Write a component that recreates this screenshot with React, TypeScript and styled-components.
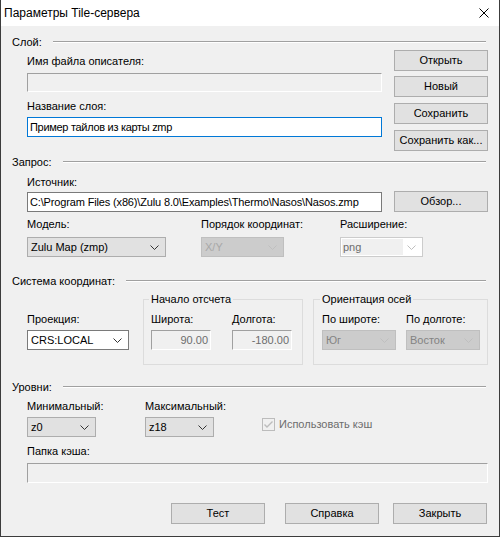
import styled, { createGlobalStyle } from "styled-components";

const GlobalStyle = createGlobalStyle`
  html, body {
    margin: 0;
    padding: 0;
    background: #ffffff;
  }
  body {
    font-family: "Liberation Sans", Arial, sans-serif;
    font-size: 11px;
    color: #000;
  }
  * {
    box-sizing: border-box;
  }
`;

const Window = styled.div`
  width: 500px;
  height: 537px;
  display: flex;
  flex-direction: column;
  border: 1px solid #3c3c3c;
  border-top: none;
  background: #f0f0f0;
`;

const TitleBar = styled.div`
  height: 26px;
  flex: none;
  display: flex;
  align-items: center;
  justify-content: space-between;
  background: #ffffff;
  padding-left: 3px;
`;

const TitleText = styled.div`
  font-size: 12px;
  line-height: 16px;
  color: #000;
`;

const CloseBox = styled.div`
  width: 30px;
  height: 26px;
  display: flex;
  align-items: center;
  justify-content: center;
`;

const Body = styled.div`
  flex: 1;
  padding: 9px 11px 0 11px;
  display: flex;
  flex-direction: column;
`;

const Section = styled.div<{ $mt?: number }>`
  margin-top: ${(p) => p.$mt ?? 0}px;
  display: flex;
  flex-direction: column;
`;

const SectionHeader = styled.div`
  height: 14px;
  display: flex;
  align-items: center;
`;

const SectionTitle = styled.div`
  line-height: 14px;
  margin-right: 11px;
  white-space: nowrap;
`;

const SectionLine = styled.div`
  flex: 1;
  height: 2px;
  margin-right: 2px;
  border-top: 1px solid #a0a0a0;
  border-bottom: 1px solid #ffffff;
`;

const Indent = styled.div<{ $mt?: number }>`
  padding-left: 15px;
  margin-top: ${(p) => p.$mt ?? 0}px;
`;

const FieldLabel = styled.div<{ $mt?: number }>`
  line-height: 15px;
  height: 15px;
  white-space: nowrap;
  margin-top: ${(p) => p.$mt ?? 0}px;
  color: #000;
`;

type FieldVariant = "normal" | "focused" | "disabled";

const TextField = styled.div<{
  $variant?: FieldVariant;
  $mt?: number;
  $h?: number;
  $right?: boolean;
  $spacing?: number;
}>`
  height: ${(p) => p.$h ?? 20}px;
  line-height: ${(p) => (p.$h ?? 20) - 2}px;
  width: 100%;
  margin-top: ${(p) => p.$mt ?? 0}px;
  padding: 0 2px;
  white-space: nowrap;
  overflow: hidden;
  font-size: 11px;
  letter-spacing: ${(p) => (p.$spacing ? `${p.$spacing}px` : "normal")};
  text-align: ${(p) => (p.$right ? "right" : "left")};
  border-style: solid;
  border-width: 1px;
  border-color: ${(p) =>
    p.$variant === "focused"
      ? "#0078d7"
      : p.$variant === "disabled"
      ? "#a0a0a0 #ffffff #ffffff #a0a0a0"
      : "#7a7a7a"};
  background: ${(p) => (p.$variant === "disabled" ? "#f0f0f0" : "#ffffff")};
  color: ${(p) => (p.$variant === "disabled" ? "#6d6d6d" : "#000")};
`;

const DialogButton = styled.button<{ $mt?: number }>`
  width: 94px;
  height: 21px;
  margin: ${(p) => p.$mt ?? 0}px 0 0 0;
  padding: 0;
  font: inherit;
  font-size: 11px;
  line-height: 19px;
  color: #000;
  background: #e1e1e1;
  border: 1px solid #adadad;
  border-radius: 0;
  text-align: center;
  white-space: nowrap;
`;

type ComboVariant = "normal" | "white" | "disabled" | "editableDisabled";

const Combo = styled.div<{ $variant?: ComboVariant; $w: number; $mt?: number }>`
  width: ${(p) => p.$w}px;
  height: 20px;
  margin-top: ${(p) => p.$mt ?? 0}px;
  display: flex;
  align-items: center;
  justify-content: space-between;
  padding: 0 6px 0 3px;
  line-height: 18px;
  white-space: nowrap;
  border: 1px solid
    ${(p) =>
      p.$variant === "white"
        ? "#7a7a7a"
        : p.$variant === "disabled"
        ? "#bfbfbf"
        : p.$variant === "editableDisabled"
        ? "#cccccc"
        : "#adadad"};
  background: ${(p) =>
    p.$variant === "white" || p.$variant === "editableDisabled"
      ? "#ffffff"
      : p.$variant === "disabled"
      ? "#cccccc"
      : "#e1e1e1"};
  color: ${(p) =>
    p.$variant === "disabled"
      ? "#838383"
      : p.$variant === "editableDisabled"
      ? "#6d6d6d"
      : "#000"};
`;

const ComboEditArea = styled.div`
  flex: 1;
  align-self: stretch;
  margin: 1px 4px 1px -2px;
  padding-left: 1px;
  line-height: 16px;
  background: #f0f0f0;
`;

const LayerGrid = styled.div`
  display: grid;
  grid-template-columns: 355px 94px;
  column-gap: 12px;
  padding-left: 15px;
  margin-top: 1px;
`;

const Column = styled.div`
  display: flex;
  flex-direction: column;
`;

const SourceRow = styled.div<{ $mt?: number }>`
  display: grid;
  grid-template-columns: 355px 94px;
  column-gap: 12px;
  align-items: center;
  margin-top: ${(p) => p.$mt ?? 0}px;
`;

const FieldsRow = styled.div<{ $mt?: number }>`
  display: flex;
  align-items: flex-start;
  margin-top: ${(p) => p.$mt ?? 0}px;
`;

const FieldCol = styled.div<{ $w: number; $pt?: number }>`
  width: ${(p) => p.$w}px;
  flex: none;
  display: flex;
  flex-direction: column;
  padding-top: ${(p) => p.$pt ?? 0}px;
`;

const GroupBox = styled.fieldset<{ $w: number; $pl: number; $pr: number; $ml?: number }>`
  width: ${(p) => p.$w}px;
  flex: none;
  margin: 0 0 0 ${(p) => p.$ml ?? 0}px;
  padding: 0 ${(p) => p.$pr}px 14px ${(p) => p.$pl}px;
  border: 1px solid #dcdcdc;
  min-inline-size: 0;
`;

const GroupTitle = styled.legend`
  padding: 0 2px;
  margin-left: -2px;
  line-height: 15px;
  font-size: 11px;
  color: #000;
`;

const GroupGrid = styled.div<{ $cols: string; $gap: number }>`
  display: grid;
  grid-template-columns: ${(p) => p.$cols};
  column-gap: ${(p) => p.$gap}px;
`;

const CheckRow = styled.div`
  display: flex;
  align-items: center;
  height: 20px;
  margin-top: 20px;
  color: #6d6d6d;
  white-space: nowrap;
`;

const CheckBox = styled.div`
  width: 13px;
  height: 13px;
  flex: none;
  border: 1px solid #bcbcbc;
  background: #f0f0f0;
  display: flex;
  align-items: center;
  justify-content: center;
  margin-right: 4px;
`;

const Footer = styled.div`
  display: flex;
  justify-content: flex-end;
  margin-top: 20px;
  padding-right: 1px;
`;

const FooterButton = styled(DialogButton)<{ $mr?: number }>`
  margin-right: ${(p) => p.$mr ?? 0}px;
`;

const Chevron = ({ color = "#333" }: { color?: string }) => (
  <svg width="9" height="5" viewBox="0 0 9 5" style={{ flex: "none" }}>
    <polyline points="0.5,0.5 4.5,4.5 8.5,0.5" fill="none" stroke={color} strokeWidth="1" />
  </svg>
);

const CloseIcon = () => (
  <svg width="10" height="10" viewBox="0 0 10 10">
    <line x1="0.5" y1="0.5" x2="9.5" y2="9.5" stroke="#000" strokeWidth="1" />
    <line x1="9.5" y1="0.5" x2="0.5" y2="9.5" stroke="#000" strokeWidth="1" />
  </svg>
);

const CheckMark = () => (
  <svg width="11" height="11" viewBox="0 0 11 11">
    <polyline points="1.5,5.5 4,8 9.5,2.5" fill="none" stroke="#bcbcbc" strokeWidth="1.4" />
  </svg>
);

const SectionHead = ({ title }: { title: string }) => (
  <SectionHeader>
    <SectionTitle>{title}</SectionTitle>
    <SectionLine />
  </SectionHeader>
);

const App = () => {
  return (
    <>
      <GlobalStyle />
      <Window>
        <TitleBar>
          <TitleText>Параметры Tile-сервера</TitleText>
          <CloseBox>
            <CloseIcon />
          </CloseBox>
        </TitleBar>
        <Body>
          <Section>
            <SectionHead title="Слой:" />
            <LayerGrid>
              <Column>
                <FieldLabel $mt={4}>Имя файла описателя:</FieldLabel>
                <TextField $variant="disabled" $mt={4} $h={19} />
                <FieldLabel $mt={7}>Название слоя:</FieldLabel>
                <TextField $variant="focused" $mt={3} $spacing={-0.3}>
                  Пример тайлов из карты zmp
                </TextField>
              </Column>
              <Column>
                <DialogButton>Открыть</DialogButton>
                <DialogButton $mt={5}>Новый</DialogButton>
                <DialogButton $mt={6}>Сохранить</DialogButton>
                <DialogButton $mt={6}>Сохранить как...</DialogButton>
              </Column>
            </LayerGrid>
          </Section>

          <Section $mt={4}>
            <SectionHead title="Запрос:" />
            <Indent>
              <FieldLabel $mt={6}>Источник:</FieldLabel>
              <SourceRow $mt={1}>
                <TextField $spacing={-0.15}>
                  C:\Program Files (x86)\Zulu 8.0\Examples\Thermo\Nasos\Nasos.zmp
                </TextField>
                <DialogButton>Обзор...</DialogButton>
              </SourceRow>
              <FieldsRow>
                <FieldCol $w={174}>
                  <FieldLabel $mt={5}>Модель:</FieldLabel>
                  <Combo $w={139} $mt={5}>
                    <span>Zulu Map (zmp)</span>
                    <Chevron />
                  </Combo>
                </FieldCol>
                <FieldCol $w={139}>
                  <FieldLabel $mt={5}>Порядок координат:</FieldLabel>
                  <Combo $w={83} $mt={5} $variant="disabled">
                    <span style={{ color: "#a8a8a8" }}>X/Y</span>
                    <Chevron color="#bfbfbf" />
                  </Combo>
                </FieldCol>
                <FieldCol $w={100}>
                  <FieldLabel $mt={5}>Расширение:</FieldLabel>
                  <Combo $w={83} $mt={5} $variant="editableDisabled">
                    <ComboEditArea>png</ComboEditArea>
                    <Chevron color="#bfbfbf" />
                  </Combo>
                </FieldCol>
              </FieldsRow>
            </Indent>
          </Section>

          <Section $mt={17}>
            <SectionHead title="Система координат:" />
            <Indent>
              <FieldsRow $mt={4}>
                <FieldCol $w={116} $pt={20}>
                  <FieldLabel>Проекция:</FieldLabel>
                  <Combo $w={102} $mt={3} $variant="white">
                    <span>CRS:LOCAL</span>
                    <Chevron />
                  </Combo>
                </FieldCol>
                <GroupBox $w={160} $pl={7} $pr={10}>
                  <GroupTitle>Начало отсчета</GroupTitle>
                  <GroupGrid $cols="60px 60px" $gap={21}>
                    <FieldLabel $mt={5}>Широта:</FieldLabel>
                    <FieldLabel $mt={5}>Долгота:</FieldLabel>
                    <TextField $variant="disabled" $mt={3} $right>
                      90.00
                    </TextField>
                    <TextField $variant="disabled" $mt={3} $right>
                      -180.00
                    </TextField>
                  </GroupGrid>
                </GroupBox>
                <GroupBox $w={175} $pl={8} $pr={7} $ml={10}>
                  <GroupTitle>Ориентация осей</GroupTitle>
                  <GroupGrid $cols="74px 74px" $gap={10}>
                    <FieldLabel $mt={5}>По широте:</FieldLabel>
                    <FieldLabel $mt={5}>По долготе:</FieldLabel>
                    <Combo $w={74} $mt={3} $variant="disabled">
                      <span>Юг</span>
                      <Chevron color="#bfbfbf" />
                    </Combo>
                    <Combo $w={74} $mt={3} $variant="disabled">
                      <span>Восток</span>
                      <Chevron color="#bfbfbf" />
                    </Combo>
                  </GroupGrid>
                </GroupBox>
              </FieldsRow>
            </Indent>
          </Section>

          <Section $mt={15}>
            <SectionHead title="Уровни:" />
            <Indent>
              <FieldsRow>
                <FieldCol $w={118}>
                  <FieldLabel $mt={5}>Минимальный:</FieldLabel>
                  <Combo $w={69} $mt={3}>
                    <span>z0</span>
                    <Chevron />
                  </Combo>
                </FieldCol>
                <FieldCol $w={117}>
                  <FieldLabel $mt={5}>Максимальный:</FieldLabel>
                  <Combo $w={69} $mt={3}>
                    <span>z18</span>
                    <Chevron />
                  </Combo>
                </FieldCol>
                <CheckRow>
                  <CheckBox>
                    <CheckMark />
                  </CheckBox>
                  Использовать кэш
                </CheckRow>
              </FieldsRow>
              <FieldLabel $mt={7}>Папка кэша:</FieldLabel>
              <TextField $variant="disabled" $mt={4} />
            </Indent>
          </Section>

          <Footer>
            <FooterButton $mr={20}>Тест</FooterButton>
            <FooterButton $mr={14}>Справка</FooterButton>
            <FooterButton>Закрыть</FooterButton>
          </Footer>
        </Body>
      </Window>
    </>
  );
};

export default App;
